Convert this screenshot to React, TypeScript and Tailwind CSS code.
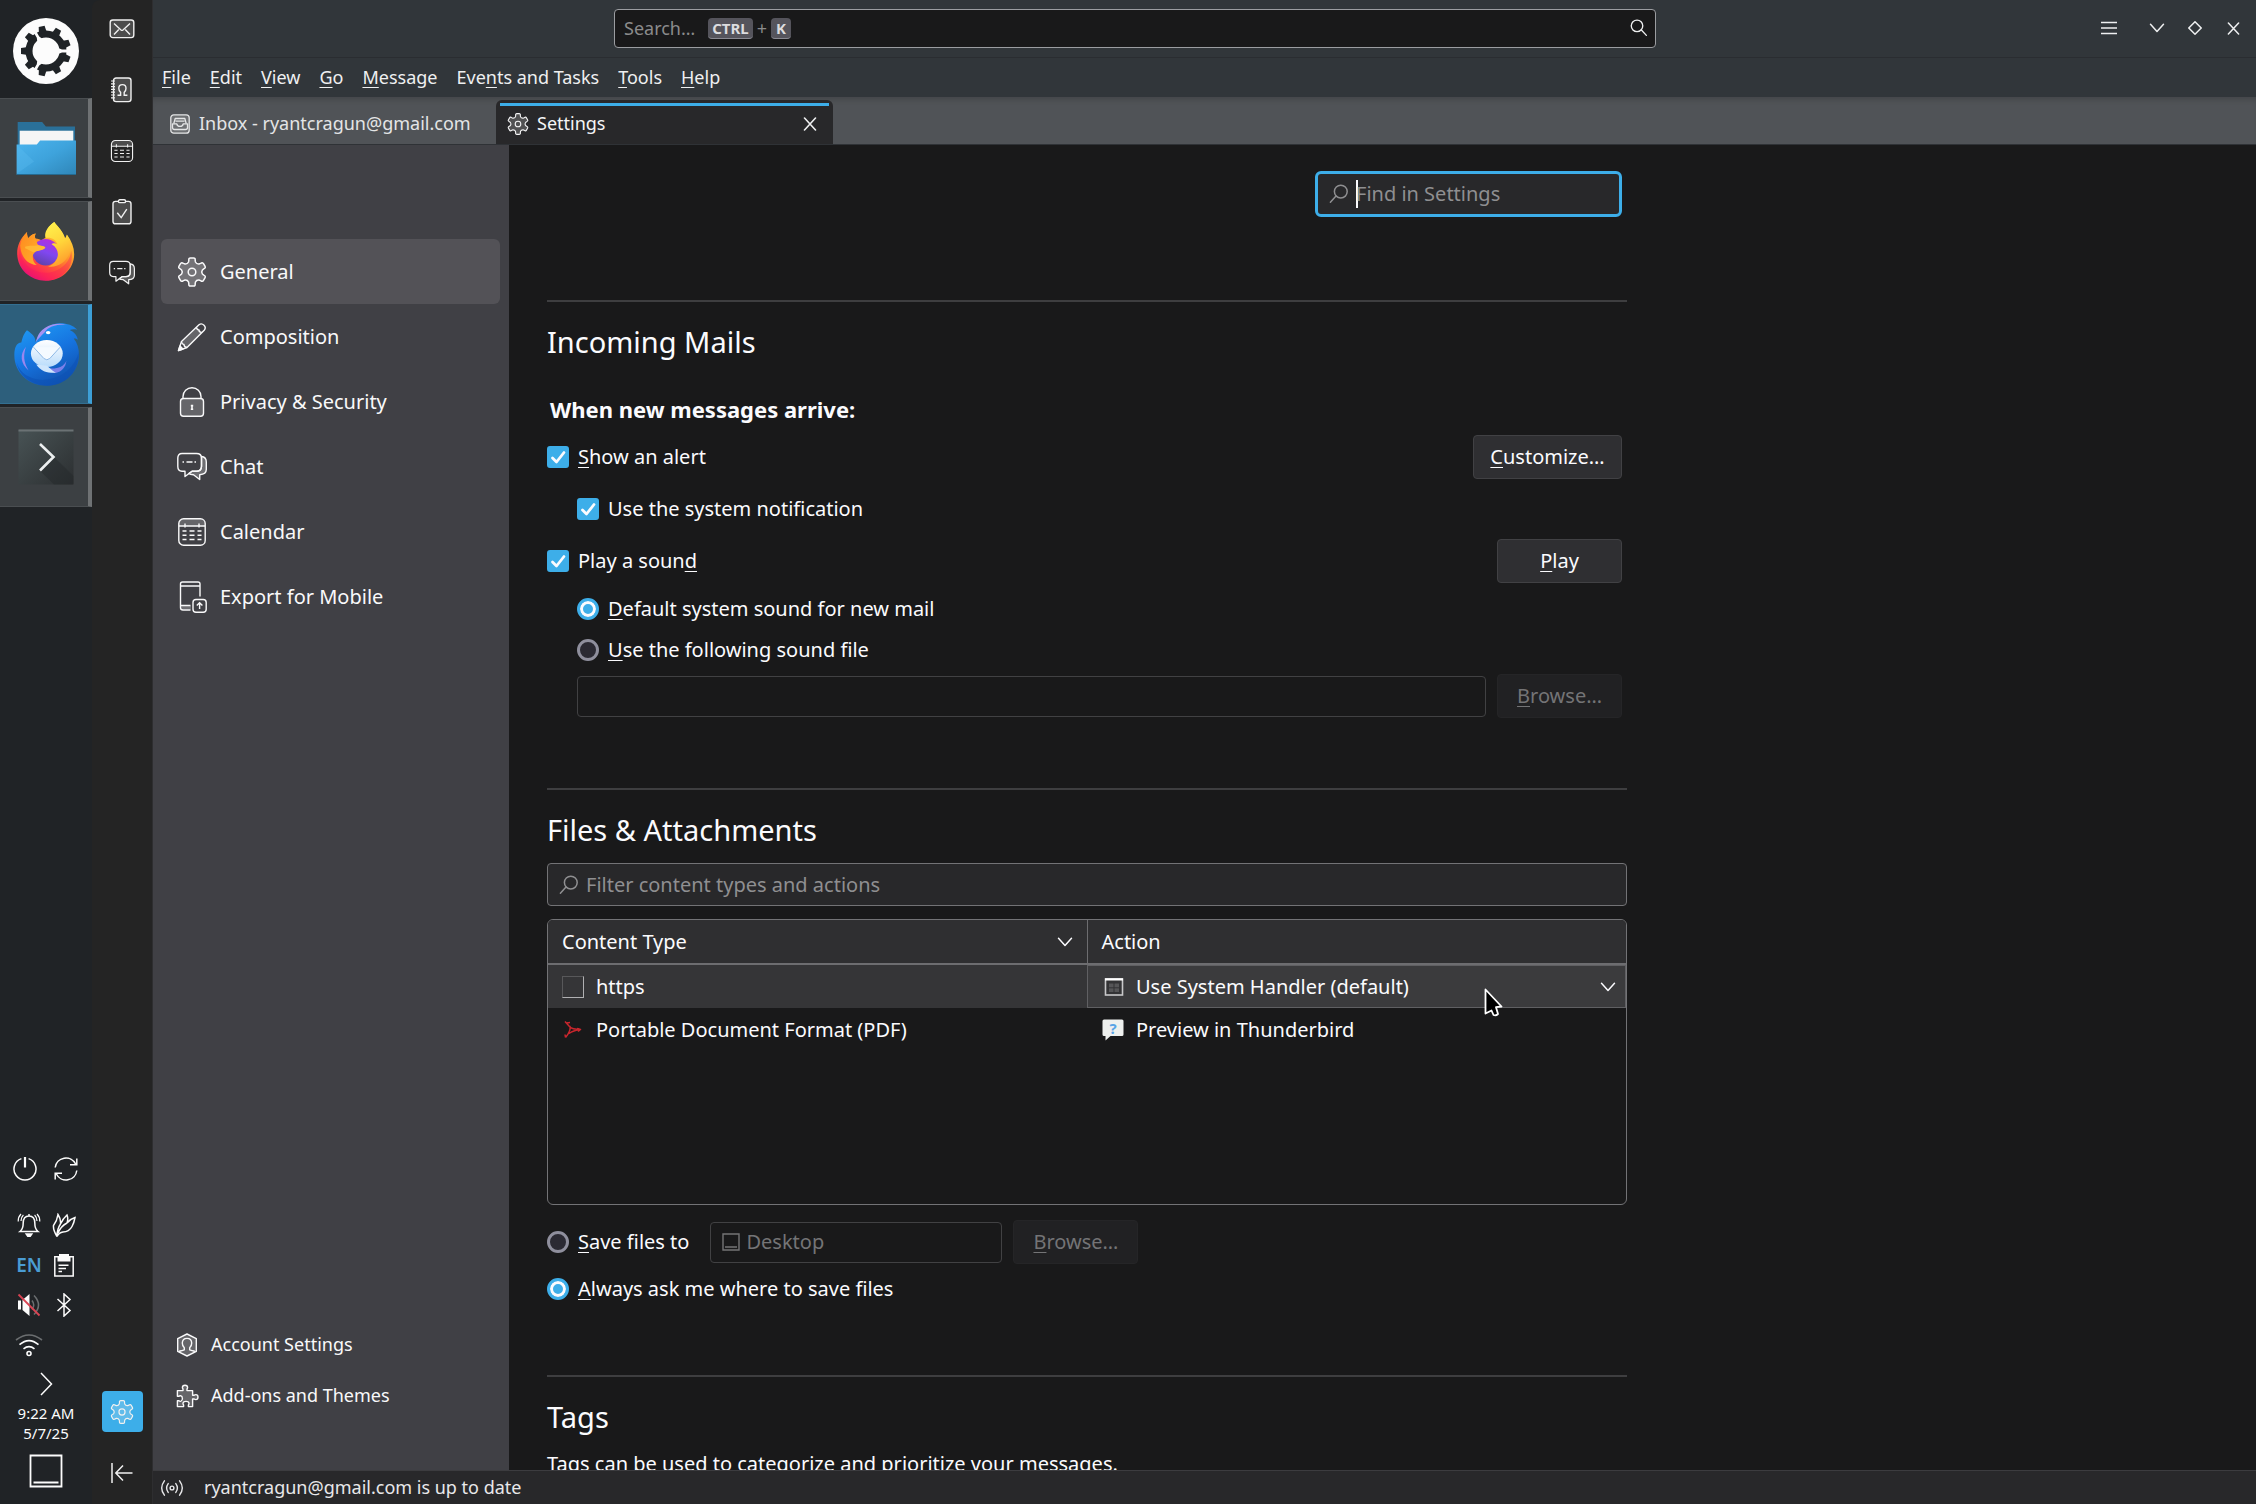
import React, { useState } from "react";

type IconProps = { className?: string };

const polar = (cx: number, cy: number, r: number, deg: number) => {
  const a = ((deg - 90) * Math.PI) / 180;
  return `${(cx + r * Math.cos(a)).toFixed(2)} ${(cy + r * Math.sin(a)).toFixed(2)}`;
};

/* Outline of a six-toothed cog with rounded teeth and hollow valleys. */
const cog = (cx: number, cy: number, outer: number, inner: number) => {
  let d = "";
  for (let k = 0; k < 6; k++) {
    const t = k * 60;
    d += `${k === 0 ? "M" : "L"}${polar(cx, cy, inner + 1, t - 19)}`;
    d += `L${polar(cx, cy, outer - 2, t - 15)}`;
    d += `Q${polar(cx, cy, outer + 0.4, t - 14)} ${polar(cx, cy, outer, t - 6)}`;
    d += `L${polar(cx, cy, outer, t + 6)}`;
    d += `Q${polar(cx, cy, outer + 0.4, t + 14)} ${polar(cx, cy, outer - 2, t + 15)}`;
    d += `L${polar(cx, cy, inner + 1, t + 19)}`;
    d += `Q${polar(cx, cy, inner - 0.6, t + 30)} ${polar(cx, cy, inner + 1, t + 41)}`;
  }
  return d + "Z";
};

function Gear({ className = "size-[30px]" }: IconProps) {
  return (
    <svg viewBox="0 0 30 30" className={className} fill="none" stroke="currentColor" strokeWidth="1.5" strokeLinejoin="round" aria-hidden="true">
      <path d={cog(15, 15, 14.2, 9.6)} fill="currentColor" fillOpacity="0.2" />
      <circle cx="15" cy="15" r="3.8" />
    </svg>
  );
}

function Pencil() {
  return (
    <svg viewBox="0 0 30 30" className="size-[30px]" fill="none" stroke="currentColor" strokeWidth="1.4" strokeLinejoin="round" aria-hidden="true">
      <path d="M5 20 L20 5 L25.5 10.5 L10 25.5 Z" fill="currentColor" fillOpacity="0.2" stroke="none" />
      <path d="M1.5 28.5 L4.5 19.5 L22 2.8 Q24.5 .8 27 3.2 Q29.4 5.8 27.2 8.2 L10 25.5 Z" />
      <path d="M19.2 5.4 Q20.5 8.4 22 8 Q21.8 10 24.8 10.6 M4.5 19.5 Q5 22.5 7 22.5 Q7 25 10 25.5" />
      <path d="M1.5 28.5 L3 24 L6 27 Z" fill="currentColor" />
    </svg>
  );
}

function Lock() {
  return (
    <svg viewBox="0 0 30 30" className="size-[30px]" fill="none" stroke="currentColor" strokeWidth="1.4" aria-hidden="true">
      <rect x="3.5" y="11.5" width="23" height="17.8" rx="3" fill="currentColor" fillOpacity="0.2" />
      <path d="M6 11.5 V9.5 A9 8.8 0 0 1 24 9.5 V11.5" />
      <path d="M15 18 V22.5 M13.8 18.6 H16.2 M13.8 22.2 H16.2" strokeWidth="1.6" />
    </svg>
  );
}

function Chat({ className = "size-[30px]" }: IconProps) {
  return (
    <svg viewBox="0 0 30 30" className={className} fill="none" stroke="currentColor" strokeWidth="1.4" strokeLinejoin="round" aria-hidden="true">
      <path d="M24.5 4.5 Q29.3 5 29.3 10 V17.5 Q29.3 22.3 22.7 22.7 V27.5 L16.5 22.7 Q13 22.7 11.8 21.6 L15 19.3 H19.5 Q24 19 24.5 14.5 Z" fill="currentColor" fillOpacity="0.25" />
      <path d="M5 1.5 H19.5 Q24.5 1.5 24.5 6 V14.5 Q24.5 19.3 19.5 19.3 H15 L8 24.5 V19.3 H5 Q.8 19 .8 14.5 V6 Q.8 1.5 5 1.5 Z" />
      <path d="M5.5 10 H7 M9.5 10 H15.5 M17.5 10 H19" />
    </svg>
  );
}

function CalendarIcon({ className = "size-[30px]" }: IconProps) {
  return (
    <svg viewBox="0 0 30 30" className={className} fill="none" stroke="currentColor" strokeWidth="1.4" aria-hidden="true">
      <path d="M2 9 V6 Q2 2 7 2 H23 Q28 2 28 6 V9 Z" fill="currentColor" fillOpacity="0.2" stroke="none" />
      <rect x="1.8" y="1.8" width="26.4" height="26.4" rx="4.8" />
      <path d="M2 9 H28 M8 6.5 V10.5 M22 6.5 V10.5" />
      <path d="M5.5 14 H9.5 M12.5 14 H17.5 M20.5 14 H24.5 M5.5 18.2 H9.5 M12.5 18.2 H17.5 M20.5 18.2 H24.5 M5.5 22.5 H9.5 M12.5 22.5 H17.5 M20.5 22.5 H24.5" />
    </svg>
  );
}

function ExportMobile() {
  return (
    <svg viewBox="0 0 30 32" className="h-[32px] w-[30px]" fill="none" stroke="currentColor" strokeWidth="1.4" aria-hidden="true">
      <path d="M4 25 H14 V28.5 H6 Q4 28 4 25 Z" fill="currentColor" fillOpacity="0.25" stroke="none" />
      <path d="M23 15.5 V3 Q23 1 21 1 H5.5 Q3.5 1 3.5 3 V26.5 Q3.5 29 6 29 H13.5 M3.5 5 H23 M3.5 24.5 H13.5" />
      <rect x="16" y="18.5" width="13.2" height="12.8" rx="3" />
      <path d="M22.6 28 V21.8 M19.8 24.6 L22.6 21.8 L25.4 24.6" />
    </svg>
  );
}

function MailIcon() {
  return (
    <svg viewBox="0 0 26 26" className="size-[26px]" fill="none" stroke="currentColor" strokeWidth="1.4" aria-hidden="true">
      <rect x="1.2" y="4" width="23.6" height="17.6" rx="2.6" fill="currentColor" fillOpacity="0.2" />
      <path d="M5 7.5 L12 14 Q13 14.8 14 14 L21 7.5 M5 18.6 L9.8 13.6 M21 18.6 L16.2 13.6" />
    </svg>
  );
}

function AddressBook() {
  return (
    <svg viewBox="0 0 26 26" className="size-[26px]" fill="none" stroke="currentColor" strokeWidth="1.4" aria-hidden="true">
      <rect x="4.5" y="1" width="17.5" height="23.6" rx="2.6" fill="currentColor" fillOpacity="0.2" />
      <path d="M2 4 H6 M2 6.8 H6 M2 9.6 H6 M2 12.4 H6 M2 15.2 H6 M2 18 H6 M2 20.8 H6" strokeWidth="1.2" />
      <path d="M8.5 18.3 H11.6 V15.4 Q9.8 14 9.8 11.2 Q9.8 7.6 13.4 7.6 Q17 7.600 17 11.2 Q17 14 15.2 15.4 V18.3 H18.4" />
    </svg>
  );
}

function TasksIcon() {
  return (
    <svg viewBox="0 0 26 26" className="size-[26px]" fill="none" stroke="currentColor" strokeWidth="1.4" aria-hidden="true">
      <rect x="4" y="2.4" width="18" height="22.4" rx="2.4" fill="currentColor" fillOpacity="0.2" />
      <rect x="9.5" y=".8" width="7" height="2.8" rx="1.2" fill="#242424" />
      <path d="M8.3 13.8 L12.2 18.6 L17.8 10.2" />
    </svg>
  );
}

function Collapse() {
  return (
    <svg viewBox="0 0 24 24" className="size-6" fill="none" stroke="currentColor" strokeWidth="1.5" aria-hidden="true">
      <path d="M2 2 V22 M22.5 12 H6 M13 4.5 L5.8 12 L13 19.5" />
    </svg>
  );
}

function InboxIcon() {
  return (
    <svg viewBox="0 0 20 20" className="size-5" fill="none" stroke="currentColor" strokeWidth="1.3" strokeLinejoin="round" aria-hidden="true">
      <rect x=".8" y=".8" width="18.4" height="18.4" rx="3" fill="currentColor" fillOpacity="0.2" />
      <path d="M2.5 9.800 H6.800 Q7.200 12.400 10 12.400 Q12.800 12.400 13.200 9.800 H17.500 V13.500 Q17.500 15.500 15.500 15.500 H4.500 Q2.500 15.500 2.500 13.500 Z" />
      <path d="M3.800 9.500 L5.200 4.500 H14.800 L16.200 9.500 M5.500 7.200 H14.500" />
    </svg>
  );
}

function AccountIcon() {
  return (
    <svg viewBox="0 0 24 24" className="size-6" fill="none" stroke="currentColor" strokeWidth="1.4" strokeLinejoin="round" aria-hidden="true">
      <path d="M12 1 L21.3 5.6 V18.4 L12 23 L2.7 18.4 V5.6 Z" fill="currentColor" fillOpacity="0.2" />
      <path d="M4.8 19 V18 Q7 17.6 9.3 16.8 V14.8 Q7.3 13 7.3 10 Q7.5 5.4 12 5.4 Q16.5 5.4 16.7 10 Q16.7 13 14.7 14.8 V16.8 Q17 17.6 19.2 18 V19" />
    </svg>
  );
}

function Puzzle() {
  return (
    <svg viewBox="0 0 24 24" className="size-6" fill="none" stroke="currentColor" strokeWidth="1.4" strokeLinejoin="round" aria-hidden="true">
      <path
        d="M2.4 6.6 H8 V5 Q7.4 4.2 7.4 3.4 Q7.4 1.2 10 1.2 Q12.6 1.2 12.6 3.4 Q12.6 4.2 12 5 V6.6 H17.6 V11.2 H19.2 Q20 10.6 20.8 10.6 Q23 10.6 23 13 Q23 15.6 20.8 15.6 Q20 15.6 19.2 15 H17.6 V22.6 H13.4 V21 Q14.2 20.2 14 19.2 Q13.6 17.4 11 17.4 Q8.4 17.4 8 19.2 Q7.8 20.2 8.6 21 V22.6 H2.4 V16.8 H4 Q4.8 17.6 6 17.2 Q7.6 16.6 7.4 14.4 Q7.4 12.2 5.6 11.8 Q4.6 11.6 4 12.2 H2.4 Z"
        fill="currentColor"
        fillOpacity="0.2"
      />
    </svg>
  );
}

function Antenna() {
  return (
    <svg viewBox="0 0 24 20" className="h-5 w-6" fill="none" stroke="currentColor" strokeWidth="1.4" strokeLinecap="round" aria-hidden="true">
      <circle cx="12" cy="10" r="1.9" />
      <path d="M8.2 5.6 Q5 10 8.2 14.4 M15.8 5.6 Q19 10 15.8 14.4 M4.4 2.8 Q-1 10 4.4 17.2 M19.6 2.8 Q25 10 19.6 17.2" />
    </svg>
  );
}

function Lens({ className = "size-5", flip = false }: IconProps & { flip?: boolean }) {
  return (
    <svg viewBox="0 0 20 20" className={className} fill="none" stroke="currentColor" strokeWidth="1.5" strokeLinecap="round" aria-hidden="true">
      <circle cx={flip ? 11.8 : 7.8} cy="7.6" r="6.4" />
      <path d={flip ? "M7 12 L1.4 18.2" : "M12.4 12 L18.2 18.2"} />
    </svg>
  );
}

function Chevron({ className = "" }: IconProps) {
  return (
    <svg viewBox="0 0 16 10" className={"h-2.5 w-4 " + className} fill="none" stroke="currentColor" strokeWidth="1.5" strokeLinecap="round" strokeLinejoin="round" aria-hidden="true">
      <path d="M1.5 1.2 L8 8.4 L14.5 1.2" />
    </svg>
  );
}

function Cross({ className = "size-[14px]" }: IconProps) {
  return (
    <svg viewBox="0 0 14 14" className={className} fill="none" stroke="currentColor" strokeWidth="1.6" strokeLinecap="round" aria-hidden="true">
      <path d="M1.5 1 L12.5 13 M12.5 1 L1.5 13" />
    </svg>
  );
}

function Kubuntu() {
  const teeth = [20, 60, 100, 140, 180, 220, 260, 300, 340];
  const cuts = [0, 120, 240];
  return (
    <svg viewBox="-33 -33 66 66" className="size-[66px]" aria-hidden="true">
      <circle r="33" fill="#fcfcfc" />
      <circle r="17" fill="none" stroke="#1f2326" strokeWidth="7" />
      {teeth.map((t) => (
        <path key={t} d="M18 -4 L25 -3 V3 L18 4 Z" fill="#1f2326" transform={`rotate(${t})`} />
      ))}
      {cuts.map((t) => (
        <path key={t} d="M12 -3 L16 -1.4 H22 V1.4 H16 L12 3 Z" fill="#fcfcfc" transform={`rotate(${t})`} />
      ))}
    </svg>
  );
}

function Folder() {
  return (
    <svg viewBox="46 365 182 164" className="h-[55px] w-[61px]" aria-hidden="true">
      <defs>
        <linearGradient id="fold" x1="0" y1="0" x2="1" y2="1">
          <stop offset="0" stopColor="#4cb4ee" />
          <stop offset=".5" stopColor="#3ea3dc" />
          <stop offset="1" stopColor="#2f86b8" />
        </linearGradient>
      </defs>
      <path d="M51 368 H124 L135 381 H222 V440 H51 Z" fill="#2a7099" />
      <rect x="57" y="394" width="160" height="50" fill="#f5f5f5" />
      <path d="M48 435 H108 L118 423 H225 V525 H48 Z" fill="url(#fold)" />
      <path d="M48 435 L100 486 L48 522 Z" fill="#5cbcf2" opacity=".35" />
      <path d="M48 523 H225 V526 H48 Z" fill="#256a90" />
    </svg>
  );
}

function Firefox() {
  return (
    <svg viewBox="48 660 180 184" className="h-[61px] w-[60px]" aria-hidden="true">
      <defs>
        <linearGradient id="ffbody" x1=".85" y1=".1" x2=".3" y2="1">
          <stop offset="0" stopColor="#ffe43f" />
          <stop offset=".35" stopColor="#ffa32a" />
          <stop offset=".62" stopColor="#ff5a36" />
          <stop offset=".82" stopColor="#ff2f50" />
          <stop offset="1" stopColor="#e0107f" />
        </linearGradient>
        <linearGradient id="ffflame" x1=".3" y1="0" x2=".6" y2="1">
          <stop offset="0" stopColor="#fff04c" />
          <stop offset=".5" stopColor="#ffd43a" />
          <stop offset="1" stopColor="#ff9a2c" />
        </linearGradient>
        <linearGradient id="ffglobe" x1=".7" y1="0" x2=".3" y2="1">
          <stop offset="0" stopColor="#b52de0" />
          <stop offset=".5" stopColor="#8047f0" />
          <stop offset="1" stopColor="#5d42a8" />
        </linearGradient>
        <linearGradient id="fffox" x1="0" y1="0" x2="1" y2=".6">
          <stop offset="0" stopColor="#ff8a1e" />
          <stop offset="1" stopColor="#ffb02c" />
        </linearGradient>
      </defs>
      <path
        d="M163 663 C172 676 188 690 195 712 C199 708 200 704 201 701 C215 720 223 740 223 760 C223 806 184 840 137 840 C90 840 51 805 51 757 C51 735 60 712 81 693 C80 700 82 706 84 712 C92 703 100 699 107 698 C104 704 104 709 106 713 C114 714 121 716 125 719 C129 714 133 712 137 711 C135 695 145 675 163 663 Z"
        fill="url(#ffbody)"
      />
      <circle cx="137" cy="754" r="40" fill="url(#ffglobe)" />
      <path
        d="M163 663 C141 678 132 696 137 711 C156 709 168 717 173 731 C164 726 158 726 155 730 C172 740 177 756 172 771 C166 786 156 794 144 797 C176 802 208 780 212 742 C213 728 208 712 201 702 C200 706 199 710 196 714 C191 692 172 676 163 663 Z"
        fill="url(#ffflame)"
      />
      <path
        d="M81 693 C70 704 62 718 60 735 C62 760 75 790 110 793 C103 787 98 780 98 768 C98 762 101 757 106 753 C112 749 128 750 136 741 C134 734 122 737 114 732 C109 726 112 722 106 713 C104 709 104 704 107 698 C100 699 92 703 84 712 C82 706 80 700 81 693 Z"
        fill="url(#fffox)"
      />
      <path d="M75 738 C90 732 100 736 114 733 C122 736 134 734 136 741 C128 750 112 749 106 753 C98 757 90 748 75 742 Z" fill="#ffc23a" opacity=".7" />
      <path d="M60 735 C56 790 100 822 150 815 C185 808 210 785 214 750 C226 800 184 840 137 840 C85 838 45 795 60 735 Z" fill="#f8135f" opacity=".35" />
    </svg>
  );
}

function Thunderbird() {
  return (
    <svg viewBox="36 968 200 196" className="h-[65px] w-[67px]" aria-hidden="true">
      <defs>
        <linearGradient id="tbbody" x1=".2" y1="0" x2=".7" y2="1">
          <stop offset="0" stopColor="#1f9bf5" />
          <stop offset=".5" stopColor="#1674e0" />
          <stop offset="1" stopColor="#1050ac" />
        </linearGradient>
        <linearGradient id="tbmail" x1="0" y1="0" x2="0" y2="1">
          <stop offset="0" stopColor="#ffffff" />
          <stop offset="1" stopColor="#b9dcfb" />
        </linearGradient>
      </defs>
      <path
        d="M77 993 C64 1008 64 1018 60 1030 C46 1030 39 1045 39 1068 C39 1120 82 1160 137 1160 C195 1160 234 1115 234 1068 C234 1048 229 1032 218 1018 C223 1017 228 1019 231 1022 C228 1008 220 998 206 992 C213 989 220 989 229 991 C205 968 165 965 135 985 C118 997 108 1012 103 1030 C104 1015 94 1004 77 993 Z"
        fill="url(#tbbody)"
      />
      <path d="M108 1015 C118 985 155 965 200 976 C165 974 140 982 130 1000 C122 1008 112 1018 103 1030 Z" fill="#a592f2" />
      <path d="M74 1043 C54 1066 58 1094 82 1114 C66 1088 66 1068 74 1043 Z" fill="#9a86ee" />
      <path d="M196 1085 C186 1108 160 1112 130 1106 C142 1114 148 1120 164 1122 C182 1118 194 1104 196 1085 Z" fill="#8d86f0" opacity=".85" />
      <path d="M46 1092 C60 1136 120 1160 180 1128 C205 1114 225 1090 233 1060 C236 1110 195 1160 137 1160 C90 1158 55 1132 46 1092 Z" fill="#0d51b5" opacity=".6" />
      <ellipse cx="137" cy="1063" rx="48" ry="41" fill="url(#tbmail)" />
      <path d="M105 1096 C120 1118 140 1122 164 1121 C150 1112 144 1106 138 1100 Z" fill="#cfe6fc" />
      <path d="M97 1044 L128 1078 Q137 1086 146 1078 L177 1044" fill="#f4faff" stroke="#8db8e6" strokeWidth="3" />
      <ellipse cx="141" cy="1000" rx="7" ry="5" fill="#fff" />
    </svg>
  );
}

function Terminal() {
  return (
    <svg viewBox="0 0 56 56" className="size-14" aria-hidden="true">
      <defs>
        <linearGradient id="term" x1="0" y1="0" x2="1" y2="1">
          <stop offset="0" stopColor="#485355" />
          <stop offset="1" stopColor="#2c2f31" />
        </linearGradient>
      </defs>
      <rect x=".5" y=".5" width="55" height="55" rx="1" fill="url(#term)" />
      <path d="M.5 1.5 H55.5" stroke="#6b7274" strokeWidth="2" />
      <path d="M22 42 L36 28 L55.5 47 V55.5 H36 Z" fill="#24282a" opacity=".45" />
      <path d="M22 15 L35.5 28 L22 41.5" fill="none" stroke="#eceff0" strokeWidth="2.6" />
    </svg>
  );
}

/* --- system tray glyphs --- */
function Tray({ children }: { children: React.ReactNode }) {
  return (
    <svg viewBox="0 0 24 24" className="size-6" fill="none" stroke="currentColor" strokeWidth="1.5" aria-hidden="true">
      {children}
    </svg>
  );
}

const taskClass = "flex h-[100px] items-center justify-center border-y border-r-4 pl-1";

function Taskbar() {
  return (
    <aside className="flex w-[92px] shrink-0 flex-col bg-[#202326] text-[#fcfcfc]">
      <button aria-label="Application launcher" className="flex h-[98px] items-center justify-center pt-1">
        <Kubuntu />
      </button>
      <nav aria-label="Task manager" className="flex flex-col gap-[3px]">
        <button aria-label="Files" className={taskClass + " border-y-[#4a4e51] border-r-[#6f7274] bg-[#3c4043]"}><Folder /></button>
        <button aria-label="Firefox" className={taskClass + " border-y-[#4a4e51] border-r-[#6f7274] bg-[#3c4043]"}><Firefox /></button>
        <button aria-label="Thunderbird" className={taskClass + " border-y-[#336f91] border-r-[#3d9fd6] bg-[#2d5f7c]"}><Thunderbird /></button>
        <button aria-label="Terminal" className={taskClass + " border-y-[#4a4e51] border-r-[#6f7274] bg-[#3c4043]"}><Terminal /></button>
      </nav>
      <div className="mt-auto flex flex-col pb-4">
        <div className="flex items-center gap-[17px] pl-[13px]">
          <button aria-label="Power">
            <Tray><path d="M8.4 1.6 A11 11 0 1 0 15.6 1.6" /><path d="M12 0 V10.5" strokeWidth="2.2" /></Tray>
          </button>
          <button aria-label="Restart">
            <Tray><path d="M1.2 10.5 A10.8 10.8 0 0 1 21.6 7 M22.8 13.5 A10.8 10.8 0 0 1 2.4 17 M22.8 1.5 V7.8 H16 M1.2 22.5 V16.2 H8" /></Tray>
          </button>
        </div>
        <div className="mt-8 grid grid-cols-[24px_24px] gap-x-[11px] gap-y-4 pl-[17px]">
          <button aria-label="Notifications">
            <Tray>
              <path d="M3 18.5 H21 Q17.8 16 17.8 10 Q17.8 3 12 3 Q6.2 3 6.2 10 Q6.2 16 3 18.5 Z M12 3 V1" />
              <path d="M9.2 21 H14.8 L13 23.6 H11 Z" fill="currentColor" />
              <path d="M4 1 Q1 4 1.2 8.5 M6.4 2 Q4.2 4 4 8 M20 1 Q23 4 22.8 8.5 M17.6 2 Q19.8 4 20 8" strokeWidth="1.2" />
            </Tray>
          </button>
          <button aria-label="Color picker">
            <Tray><path d="M5 23.5 Q1 17 1.5 12.5 Q5 8 6 1.5 Q9 6 8.5 11 Q11 5.5 15 2 Q16.5 6 15 10 Q18 6 23 4.5 Q22 10 20 13.5 Q17 19 11 19 Q7 19.5 5 23.5 Q5 16 8.5 11 M6 20 Q9 13 15 10" /></Tray>
          </button>
          <button aria-label="Keyboard layout" className="flex h-6 items-center justify-center text-[19px] leading-6 font-semibold text-[#4a9cd3]">EN</button>
          <button aria-label="Clipboard">
            <Tray><path d="M2.8 3.8 H21.2 V23 H2.8 Z M6.5 12.2 H16.5 M6.5 15.4 H14 M6.5 18.6 H10" /><path d="M7 1 H17 V3.5 H18.5 V8.5 H5.5 V3.5 H7 Z" fill="currentColor" stroke="none" /></Tray>
          </button>
          <button aria-label="Volume muted">
            <Tray>
              <path d="M1 7.5 H4 V16.5 H1 Z M5.5 7 L12.5 1 V23 L5.5 17 Z" fill="currentColor" stroke="none" />
              <path d="M15 7.5 Q18.5 12 15 16.5 M17 2.5 Q26 12 17 21.5" stroke="#6b6e70" />
              <path d="M1.5 1.5 L22.5 22.5" stroke="#da4453" strokeWidth="1.8" />
            </Tray>
          </button>
          <button aria-label="Bluetooth">
            <Tray><path d="M5.5 6 L18 17.5 L12 23 V1 L18 6.5 L5.5 18" /></Tray>
          </button>
          <button aria-label="Wi-Fi">
            <svg viewBox="-2 0 28 24" className="-mx-0.5 h-6 w-7 max-w-none" fill="none" stroke="currentColor" strokeWidth="1.6" aria-hidden="true">
              <circle cx="12" cy="20.500" r="2" />
              <path d="M6.500 15.800 Q12 11.500 17.500 15.800 M2.500 11.600 Q12 3.500 21.500 11.600" />
              <path d="M-1 7 Q12 -3 25 7" stroke="#6b6e70" />
            </svg>
          </button>
        </div>
        <button aria-label="Show hidden icons" className="mt-[15px] flex h-6 justify-center">
          <Tray><path d="M7 1 L17.5 12 L7 23" /></Tray>
        </button>
        <div className="mt-[7px] text-center text-[15px] leading-5">
          <p>9:22 AM</p>
          <p>5/7/25</p>
        </div>
        <button aria-label="Show desktop" className="mt-[11px] flex justify-center">
          <svg viewBox="0 0 34 34" className="size-[34px]" fill="none" stroke="currentColor" strokeWidth="1.8" aria-hidden="true">
            <path d="M1.5 1.5 H32.5 V32.5 H1.5 Z M4.5 28.5 H29.5" />
          </svg>
        </button>
      </div>
    </aside>
  );
}

function Spaces() {
  const item = "flex h-[41px] w-[41px] items-center justify-center rounded";
  return (
    <nav aria-label="Spaces" className="flex w-[61px] shrink-0 flex-col items-center gap-5 rounded-tl-lg border-r border-[#2e2e30] bg-[#242424] pt-2 pb-[11px] text-[#f0f0f0]">
      <button aria-label="Mail" className={item}><MailIcon /></button>
      <button aria-label="Address Book" className={item}><AddressBook /></button>
      <button aria-label="Calendar" className={item}><CalendarIcon className="size-6" /></button>
      <button aria-label="Tasks" className={item}><TasksIcon /></button>
      <button aria-label="Chat" className={item}><Chat className="size-[26px]" /></button>
      <button aria-label="Settings" className={item + " mt-auto bg-[#3daee9]"}><Gear className="size-6" /></button>
      <button aria-label="Collapse spaces toolbar" className={item}><Collapse /></button>
    </nav>
  );
}

/* Label text whose character at index `at` carries the access-key underline. */
function Key({ text, at = 0 }: { text: string; at?: number }) {
  return (
    <span>
      {text.slice(0, at)}
      <span className="underline decoration-1 underline-offset-[3px]">{text[at]}</span>
      {text.slice(at + 1)}
    </span>
  );
}

const menus = [
  { text: "File" },
  { text: "Edit" },
  { text: "View" },
  { text: "Go" },
  { text: "Message" },
  { text: "Events and Tasks", at: 3 },
  { text: "Tools" },
  { text: "Help" },
];

function Header() {
  const kbd = "rounded border-b border-[#8a8a92] bg-[#55545c] text-center font-['Noto_Sans'] text-[15px] leading-5 font-bold text-[#dcdcdf]";
  return (
    <header className="bg-[#31363a] text-[18px] text-[#eff0f1]">
      <div className="flex h-[58px] items-center border-b border-[#2a2d31] pb-px">
        <div className="flex-1" />
        <div className="flex h-[39px] w-[1042px] shrink items-center rounded border border-[#9b9da1] bg-[#19191a] pr-[7px] pl-[9px]">
          <input aria-label="Search" placeholder="Search…" className="w-[84px] bg-transparent leading-6 outline-none placeholder:text-[#8b8b8c]" />
          <kbd className={kbd + " w-[45px]"}>CTRL</kbd>
          <span className="w-[18px] text-center text-[#8b8b8c]">+</span>
          <kbd className={kbd + " w-5"}>K</kbd>
          <button aria-label="Start search" className="ml-auto"><Lens className="size-[18px]" /></button>
        </div>
        <div className="flex flex-1 justify-end">
          <button aria-label="Application menu">
            <svg viewBox="0 0 16 14" className="h-[14px] w-4" stroke="currentColor" strokeWidth="1.5" aria-hidden="true">
              <path d="M0 1.5 H16 M0 7 H16 M0 12.5 H16" />
            </svg>
          </button>
        </div>
        <div className="flex w-[139px] justify-end pr-1">
          <button aria-label="Minimize" className="flex w-[38px] items-center justify-center"><Chevron /></button>
          <button aria-label="Maximize" className="flex w-[38px] items-center justify-center">
            <svg viewBox="0 0 14 14" className="size-[14px]" fill="none" stroke="currentColor" strokeWidth="1.5" aria-hidden="true">
              <path d="M7 .8 L13.2 7 L7 13.2 L.8 7 Z" />
            </svg>
          </button>
          <button aria-label="Close window" className="flex w-[38px] items-center justify-center"><Cross className="size-[13px]" /></button>
        </div>
      </div>
      <div role="menubar" className="flex h-[39px] items-center gap-[19px] pl-[9px]">
        {menus.map((m) => (
          <button key={m.text} role="menuitem"><Key text={m.text} at={m.at} /></button>
        ))}
      </div>
      <div role="tablist" className="flex h-12 items-end border-b border-[#2f3236] bg-[#505357] shadow-[inset_0_6px_6px_-4px_#00000030]">
        <button role="tab" aria-selected="false" className="flex h-[41px] w-[343px] items-center gap-[9px] pl-[17px] text-[#e4e5e6]">
          <InboxIcon />
          Inbox - ryantcragun@gmail.com
        </button>
        <div className="h-11 w-[337px] rounded-t-md bg-[#28282a] px-1 pt-[3px]">
          <div className="flex h-[41px] items-center border-t-[3px] border-[#3daee9] pr-3 pb-[3px] pl-[7px]">
            <button role="tab" aria-selected="true" className="flex flex-1 items-center gap-2 text-[#f5f5f6]">
              <Gear className="size-[22px]" />
              Settings
            </button>
            <button aria-label="Close tab"><Cross /></button>
          </div>
        </div>
      </div>
    </header>
  );
}

const categories = [
  { label: "General", icon: <Gear /> },
  { label: "Composition", icon: <Pencil /> },
  { label: "Privacy & Security", icon: <Lock /> },
  { label: "Chat", icon: <Chat /> },
  { label: "Calendar", icon: <CalendarIcon /> },
  { label: "Export for Mobile", icon: <ExportMobile /> },
];

function Sidebar() {
  return (
    <nav aria-label="Settings categories" className="flex w-[356px] shrink-0 flex-col bg-[#404045] pt-[94px] pr-[9px] pb-[49px] pl-2 text-[20px] text-[#f9f9fa]">
      {categories.map((c, i) => (
        <a
          key={c.label}
          href="#"
          aria-current={i === 0 ? "page" : undefined}
          className={i === 0 ? "flex h-[65px] items-center gap-[13px] rounded-md bg-[#535257] pl-4" : "flex h-[65px] items-center gap-[13px] pl-4"}
        >
          {c.icon}
          {c.label}
        </a>
      ))}
      <div className="mt-auto flex flex-col text-[18px]">
        <a href="#" className="flex h-[51px] items-center gap-3 pl-[14px]"><AccountIcon />Account Settings</a>
        <a href="#" className="flex h-[51px] items-center gap-3 pl-[14px]"><Puzzle />Add-ons and Themes</a>
      </div>
    </nav>
  );
}

function Check({ text, at = -1 }: { text: string; at?: number }) {
  const [on, setOn] = useState(true);
  return (
    <label className="flex items-center gap-[9px]">
      <span className="grid size-[22px] place-items-center">
        <input
          type="checkbox"
          checked={on}
          onChange={() => setOn(!on)}
          className="col-start-1 row-start-1 size-[22px] appearance-none rounded-[3px] border-2 border-[#8f8f9d] bg-[#2b2a33] checked:border-[#3daee9] checked:bg-[#3daee9]"
        />
        {on && (
          <svg viewBox="0 0 22 22" className="pointer-events-none col-start-1 row-start-1 size-[22px]" fill="none" stroke="#fbfbfe" strokeWidth="2.8" strokeLinecap="round" strokeLinejoin="round" aria-hidden="true">
            <path d="M5.5 12 L9.5 16 L17 6.5" />
          </svg>
        )}
      </span>
      {at < 0 ? text : <Key text={text} at={at} />}
    </label>
  );
}

function Radio({ name, text, on = false }: { name: string; text: string; on?: boolean }) {
  return (
    <label className="flex items-center gap-[9px]">
      <input
        type="radio"
        name={name}
        defaultChecked={on}
        className="size-[22px] appearance-none rounded-full border-[3px] border-[#8f8f9d] bg-[#2b2a33] checked:border-[#3daee9] checked:bg-[#3daee9] checked:shadow-[inset_0_0_0_3px_#fbfbfe]"
      />
      <Key text={text} />
    </label>
  );
}

function Button({ text, off = false, wide = false }: { text: string; off?: boolean; wide?: boolean }) {
  return (
    <button
      disabled={off}
      className={
        (wide ? "w-[149px] " : "w-[125px] ") +
        "h-11 shrink-0 rounded border border-[#414144] bg-[#2f2f32] text-[#fbfbfe] disabled:border-[#252527] disabled:bg-[#212123] disabled:text-[#747476]"
      }
    >
      <Key text={text} />
    </button>
  );
}

function Section({ title, children, className = "" }: { title: string; children: React.ReactNode; className?: string }) {
  return (
    <section className={"border-t-2 border-[#3e3e40] pt-5 " + className}>
      <h2 className="text-[29px] leading-10">{title}</h2>
      {children}
    </section>
  );
}

function PdfIcon() {
  return (
    <svg viewBox="0 0 22 22" className="size-[22px]" fill="none" stroke="#c9262d" strokeWidth="1.5" strokeLinejoin="round" aria-hidden="true">
      <path d="M3 2.500 L7.500 7.500 Q10 10.500 18.500 10.500 M5 4 L8 3.500 M8 7 Q9 12 3.500 18.500 M3 15.500 L3.500 18.500 M18.500 10.500 Q11 11.500 7 14.500 M15 9.500 L18.500 10.500 L16 12.500" />
    </svg>
  );
}

function WindowIcon() {
  return (
    <svg viewBox="0 0 20 20" className="size-5" fill="none" aria-hidden="true">
      <rect x="1.5" y="2" width="17" height="16" fill="#333335" stroke="#c8c8ca" strokeWidth="1.6" />
      <path d="M1 2.400 H19" stroke="#fff" strokeWidth="2.4" />
      <path d="M5 6.5 H15 V15 H5 Z" fill="#555557" />
      <path d="M10 6 V15.5 M4.5 10.8 H15.5" stroke="#333335" />
    </svg>
  );
}

function PreviewIcon() {
  return (
    <span className="relative flex size-[22px] items-start justify-center">
      <svg viewBox="0 0 22 22" className="absolute inset-0 size-[22px]" aria-hidden="true">
        <path d="M2 .5 H20 Q21.5 .5 21.5 2 V15.5 Q21.5 17 20 17 H8.5 L3.500 21.5 V17 H2 Q.5 17 .5 15.5 V2 Q.5 .5 2 .5 Z" fill="#eef0ee" />
      </svg>
      <span className="relative text-[15px] leading-[18px] font-bold text-[#5aa5e6]">?</span>
    </span>
  );
}

function FilesTable() {
  return (
    <div className="mt-[13px] h-[286px] overflow-hidden rounded-md border border-[#737376]">
      <table className="w-full table-fixed border-collapse text-left">
        <thead>
          <tr className="h-11 border-b-2 border-[#6d6d70] bg-[#2f2f31]">
            <th className="border-r border-[#6d6d70] p-0 font-normal">
              <button className="flex w-full items-center justify-between px-[14px]">
                Content Type
                <Chevron />
              </button>
            </th>
            <th className="p-0 pl-[14px] font-normal">Action</th>
          </tr>
        </thead>
        <tbody>
          <tr className="h-11 bg-[#353537]">
            <td className="p-0">
              <div className="flex items-center gap-3 pl-[14px]">
                <span className="size-[22px] border border-t-[#58585a] border-r-[#b0b0b2] border-b-[#b0b0b2] border-l-[#58585a]" />
                https
              </div>
            </td>
            <td className="p-0">
              <div className="relative flex h-[43px] items-center border border-[#606063] bg-[#3b3b3d]">
                <span className="pointer-events-none absolute left-4"><WindowIcon /></span>
                <select aria-label="Action for https" className="h-full w-full appearance-none bg-transparent pl-12 outline-none">
                  <option>Use System Handler (default)</option>
                </select>
                <Chevron className="pointer-events-none absolute right-[9px]" />
              </div>
            </td>
          </tr>
          <tr className="h-11">
            <td className="p-0">
              <div className="flex items-center gap-3 pl-[14px]"><PdfIcon />Portable Document Format (PDF)</div>
            </td>
            <td className="p-0">
              <div className="flex items-center gap-3 pl-[15px]"><PreviewIcon />Preview in Thunderbird</div>
            </td>
          </tr>
        </tbody>
      </table>
    </div>
  );
}

function Content() {
  return (
    <main className="min-w-0 flex-1 overflow-hidden bg-[#19191a] pr-8 pl-[38px] text-[20px] leading-[30px] text-[#fbfbfe]">
      <div className="max-w-[1080px]">
        <div className="flex justify-end pt-[26px] pr-[5px]">
          <div className="flex h-[46px] w-[307px] items-center rounded-md border-[3px] border-[#3daee9] bg-[#28282a] pl-[11px] text-[#8f8f91]">
            <Lens flip />
            <span className="ml-[7px] h-7 w-[2px] bg-[#fbfbfe]" />
            <input aria-label="Find in Settings" placeholder="Find in Settings" className="-ml-0.5 min-w-0 flex-1 bg-transparent outline-none placeholder:text-[#8f8f91]" />
          </div>
        </div>

        <Section title="Incoming Mails" className="mt-[83px]">
          <h3 className="mt-8 pl-[3px] text-[22px] font-bold">When new messages arrive:</h3>
          <div className="mt-[11px] pr-[5px]">
            <div className="flex h-11 items-center justify-between">
              <Check text="Show an alert" at={0} />
              <Button text="Customize…" wide />
            </div>
            <div className="flex h-[60px] items-center pl-[30px]">
              <Check text="Use the system notification" />
            </div>
            <div className="flex h-11 items-center justify-between">
              <Check text="Play a sound" at={11} />
              <Button text="Play" />
            </div>
            <div className="mt-[5px] pl-[30px]">
              <div className="flex h-[41px] items-center"><Radio name="sound" text="Default system sound for new mail" on /></div>
              <div className="flex h-[41px] items-center"><Radio name="sound" text="Use the following sound file" /></div>
              <div className="mt-1 flex items-center gap-[11px]">
                <input aria-label="Sound file" disabled className="h-[41px] min-w-0 flex-1 rounded border border-[#414143] bg-transparent px-3" />
                <Button text="Browse…" off />
              </div>
            </div>
          </div>
        </Section>

        <Section title="Files & Attachments" className="mt-[70px]">
          <div className="mt-[13px] flex h-[43px] items-center gap-[7px] rounded border border-[#737376] bg-[#28282a] pl-[11px] text-[#8f8f91]">
            <Lens flip />
            <input aria-label="Filter content types and actions" placeholder="Filter content types and actions" className="flex-1 bg-transparent outline-none placeholder:text-[#8f8f91]" />
          </div>
          <FilesTable />
          <div className="mt-[15px] flex h-11 items-center">
            <Radio name="save" text="Save files to" />
            <div className="ml-[21px] flex h-[41px] w-[292px] items-center gap-1.5 rounded border border-[#414143] pl-[11px] text-[#747476]">
              <svg viewBox="0 0 18 18" className="size-[18px]" fill="none" stroke="currentColor" strokeWidth="1.4" aria-hidden="true">
                <path d="M1 1 H17 V17 H1 Z M3 14 H15" />
              </svg>
              <input aria-label="Save folder" disabled defaultValue="Desktop" className="min-w-0 flex-1 bg-transparent" />
            </div>
            <div className="ml-[11px]"><Button text="Browse…" off /></div>
          </div>
          <div className="mt-[5px] flex h-10 items-center">
            <Radio name="save" text="Always ask me where to save files" on />
          </div>
        </Section>

        <Section title="Tags" className="mt-[66px]">
          <p className="mt-3">Tags can be used to categorize and prioritize your messages.</p>
        </Section>
      </div>
    </main>
  );
}

export default function App() {
  return (
    <div className="relative flex h-screen overflow-hidden bg-[#202326] font-['Noto_Sans',sans-serif]">
      <Taskbar />
      <Spaces />
      <div className="flex min-w-0 flex-1 flex-col">
        <Header />
        <div className="flex min-h-0 flex-1">
          <Sidebar />
          <Content />
        </div>
        <footer className="flex h-[34px] items-center gap-5 border-t border-[#3c3c3f] bg-[#28282a] pl-[7px] text-[18px] text-[#e8e8ea]">
          <Antenna />
          ryantcragun@gmail.com is up to date
        </footer>
      </div>
      <svg viewBox="0 0 19 29" className="pointer-events-none absolute top-[988px] left-[1484px] h-[29px] w-[19px]" aria-hidden="true">
        <path d="M1.5 1.5 L17.5 18.5 L12 19.2 L14 26 Q12 28 9.5 27 L7.5 22.5 L1.5 25.5 Z" fill="#000" stroke="#fff" strokeWidth="1.8" strokeLinejoin="round" />
      </svg>
    </div>
  );
}
